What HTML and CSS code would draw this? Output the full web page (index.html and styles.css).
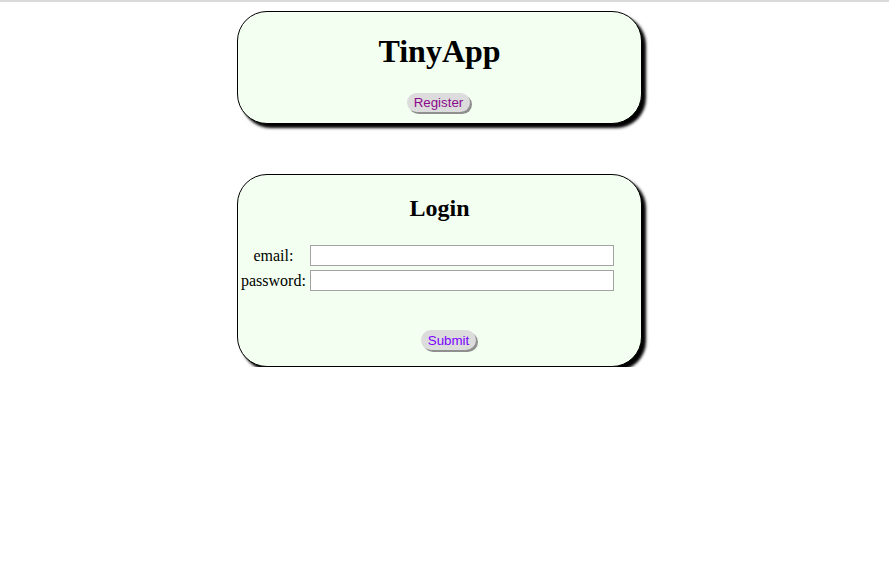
FILE: index.html
```html
<!DOCTYPE html>
<html lang="en">
<head>
<meta charset="utf-8">
<title>TinyApp</title>
<link rel="stylesheet" href="styles.css">
</head>
<body>
<div class="topbar"></div>
<main class="page">
  <header class="card card-head">
    <h1 class="title">TinyApp</h1>
    <div class="actions">
      <button class="btn btn-register" type="button">Register</button>
    </div>
  </header>
  <section class="card card-login">
    <h2 class="subtitle">Login</h2>
    <form class="login-form">
      <table class="fields">
        <tr>
          <td class="label">email:</td>
          <td><input class="field" type="text" name="email"></td>
        </tr>
        <tr>
          <td class="label">password:</td>
          <td><input class="field" type="password" name="password"></td>
        </tr>
      </table>
      <div class="submit-row">
        <button class="btn btn-submit" type="submit">Submit</button>
      </div>
    </form>
  </section>
</main>
</body>
</html>
```
FILE: styles.css
```css
html, body {
  margin: 0;
  padding: 0;
  background: #ffffff;
}
body {
  font-family: "Liberation Serif", "Times New Roman", serif;
  font-size: 16px;
  color: #000;
}
.topbar {
  height: 2px;
  background: #dadada;
}
.page {
  padding: 9px 10px 0 0;
}
.card {
  box-sizing: border-box;
  width: 405px;
  margin: 0 auto;
  border: 1px solid #000;
  border-radius: 30px;
  background: #f3fff0;
  box-shadow: 4px 4px 3px #000;
}
.card-head {
  height: 113px;
}
.title {
  margin: 21px 0 0;
  font-size: 32px;
  line-height: 37px;
  font-weight: bold;
  text-align: center;
}
.actions {
  margin-top: 23px;
  display: flex;
  justify-content: center;
  padding-right: 2px;
}
.btn {
  font-family: "Liberation Sans", Arial, sans-serif;
  font-size: 13.33px;
  line-height: 15px;
  padding: 2px 7px;
  border: none;
  border-radius: 10px;
  background: #dcdcdc;
  box-shadow: 2px 2px 0 #8f8f8f;
  cursor: pointer;
}
.btn-register {
  color: #8b0a8b;
}
.btn-submit {
  color: #7b00ff;
  padding: 3px 7px 2px;
}
.card-login {
  height: 193px;
  margin-top: 50px;
}
.subtitle {
  margin: 20px 0 0;
  font-size: 24px;
  line-height: 27px;
  font-weight: bold;
  text-align: center;
}
.login-form {
  margin: 20px 0 0;
}
.fields {
  border-spacing: 2px;
}
.fields td {
  padding: 1px;
}
.label {
  text-align: center;
}
.field {
  box-sizing: border-box;
  display: block;
  width: 304px;
  height: 21px;
  padding: 1px 2px;
  border: 1px solid #a3a3a3;
  background: #fff;
  font-size: 13.33px;
}
.submit-row {
  margin-top: 36px;
  padding-left: 18px;
  display: flex;
  justify-content: center;
}
```
